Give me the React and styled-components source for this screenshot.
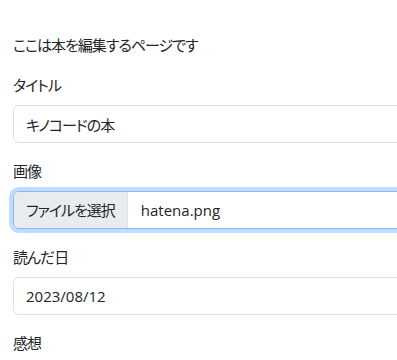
import React from "react";
import styled, { createGlobalStyle } from "styled-components";

const Global = createGlobalStyle`
  html, body { margin: 0; padding: 0; background: #fff; overflow: hidden; }
  body {
    font-family: "Open Sans", "Noto Sans CJK JP", sans-serif;
    font-feature-settings: "palt";
    font-size: 15px;
    line-height: 24px;
    color: #212529;
  }
  * { box-sizing: border-box; }
`;

const Page = styled.div`
  padding: 33px 0 0 13px;
  width: 700px;
`;

const Intro = styled.p`
  margin: 0 0 16px;
  letter-spacing: -1px;
`;

const Field = styled.div`
  margin-bottom: 16px;
`;

const Label = styled.label`
  display: block;
  margin-bottom: 8px;
  letter-spacing: -1px;
`;

const TextInput = styled.input`
  display: block;
  width: 100%;
  height: 38px;
  padding: 6px 12px;
  font: inherit;
  font-feature-settings: "palt";
  letter-spacing: ${(p) => (p.$cjk ? "-1px" : "0")};
  color: #212529;
  background: #fff;
  border: 1px solid #dee2e6;
  border-radius: 6px;
  outline: none;
`;

const FileBox = styled.div`
  display: flex;
  align-items: stretch;
  height: 38px;
  border: 1px solid #86b7fe;
  border-radius: 6px;
  box-shadow: 0 0 0 4px rgba(13, 110, 253, 0.25);
  overflow: hidden;
  background: #fff;
`;

const FileButton = styled.span`
  display: flex;
  align-items: center;
  padding: 0 12px;
  background: #e9ecef;
  border-right: 1px solid #dee2e6;
  color: #212529;
  letter-spacing: -1px;
`;

const FileName = styled.span`
  display: flex;
  align-items: center;
  padding: 0 13px;
`;

export default function App() {
  return (
    <>
      <Global />
      <Page>
        <Intro>ここは本を編集するページです</Intro>
        <Field>
          <Label>タイトル</Label>
          <TextInput $cjk readOnly value="キノコードの本" />
        </Field>
        <Field>
          <Label>画像</Label>
          <FileBox>
            <FileButton>ファイルを選択</FileButton>
            <FileName>hatena.png</FileName>
          </FileBox>
        </Field>
        <Field>
          <Label>読んだ日</Label>
          <TextInput readOnly value="2023/08/12" />
        </Field>
        <Field>
          <Label>感想</Label>
        </Field>
      </Page>
    </>
  );
}
